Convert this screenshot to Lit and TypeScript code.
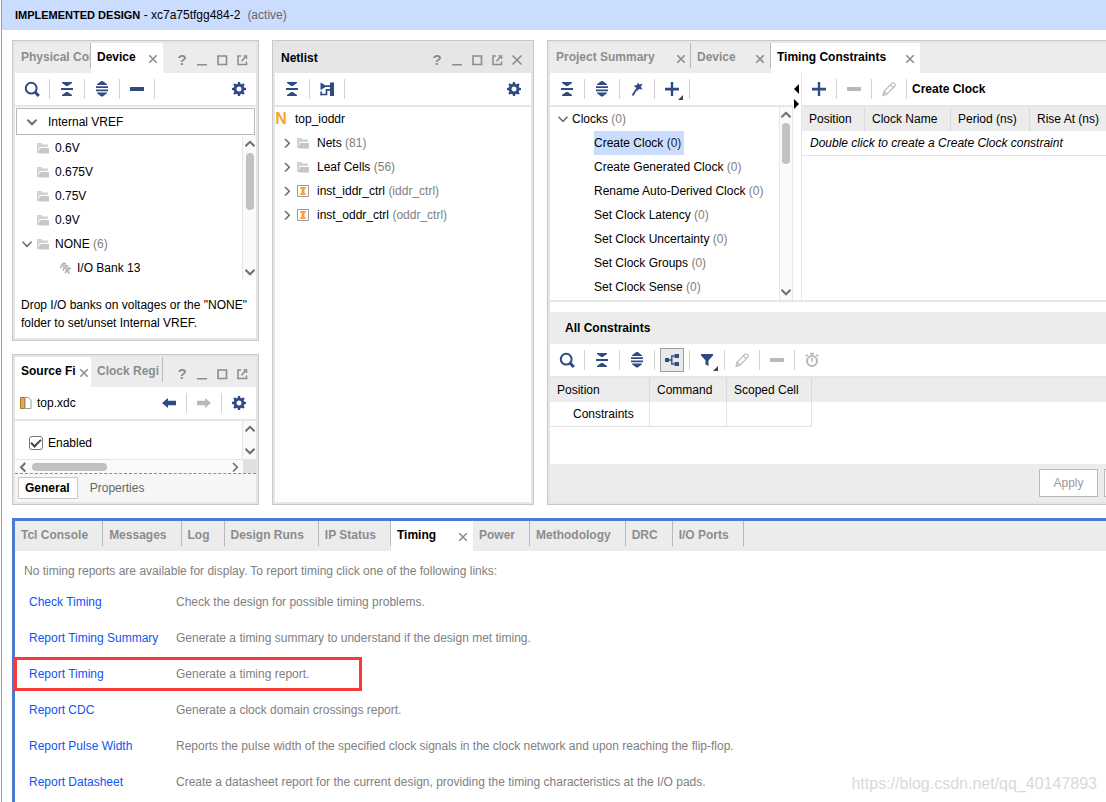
import { LitElement, html, svg, css, nothing } from "lit";
import { customElement, state } from "lit/decorators.js";
import { classMap } from "lit/directives/class-map.js";

const gearTeeth = [0, 45, 90, 135, 180, 225, 270, 315];

const glyphs: Record<string, unknown> = {
  search: svg`<circle cx="7.200" cy="7.200" r="5.400" fill="none" stroke="currentColor" stroke-width="2"/><path d="M11 11l3.800 4" stroke="currentColor" stroke-width="3"/>`,
  collapse: svg`<path d="M3 1h10v1L8.8 5H7.2L3 2zM2 7h12v2H2zM3 15h10v-1L8.8 11H7.2L3 14z" fill="currentColor"/>`,
  expand: svg`<path d="M7.300 0h1.400L13 3.200V4H3v-.8zM2 5.300h12V7H2zM2 8.500h12v1.700H2zM3 11.500h10v.8L8.700 15.500H7.300L3 12.300z" fill="currentColor"/>`,
  minus: svg`<path d="M1 6h14v4H1z" fill="currentColor"/>`,
  plus: svg`<path d="M1 6.800h5.800V1h2.400v5.800H15v2.600H9.200V15H6.800V9.400H1z" fill="currentColor"/>`,
  gear: svg`${gearTeeth.map((a) => svg`<path d="M6.300 4L7 1h2l.7 3z" fill="currentColor" transform=${`rotate(${a} 8 8)`}/>`)}<circle cx="8" cy="8" r="3.900" fill="none" stroke="currentColor" stroke-width="2.800"/>`,
  min: svg`<path d="M3 12h10v1.500H3z" fill="currentColor"/>`,
  max: svg`<path d="M4 4h8.500v8.500H4z" fill="none" stroke="currentColor" stroke-width="1.600"/>`,
  popout: svg`<path d="M7 4H4v8.500h8.500V9.500M9.500 4h3v3" fill="none" stroke="currentColor" stroke-width="1.500"/><path d="M7.500 9.300L11.500 4.800" stroke="currentColor" stroke-width="1.500"/>`,
  close: svg`<path d="M4.300 4.300l7.400 7.400M11.700 4.300l-7.400 7.400" stroke="currentColor" stroke-width="1.600"/>`,
  closeBig: svg`<path d="M3.500 3.500l9 9M12.500 3.500l-9 9" stroke="currentColor" stroke-width="1.600"/>`,
  down: svg`<path d="M3.500 5.800L8 10.300l4.500-4.500" fill="none" stroke="currentColor" stroke-width="1.600"/>`,
  up: svg`<path d="M3.500 10.300L8 5.800l4.500 4.500" fill="none" stroke="currentColor" stroke-width="2"/>`,
  downBold: svg`<path d="M3.500 5.800L8 10.300l4.500-4.500" fill="none" stroke="currentColor" stroke-width="2"/>`,
  right: svg`<path d="M6 4l4.300 4.200L6 12.500" fill="none" stroke="currentColor" stroke-width="1.600"/>`,
  left: svg`<path d="M10.300 4L6 8.200l4.300 4.300" fill="none" stroke="currentColor" stroke-width="2"/>`,
  folder: svg`<path d="M2 3h4.500l1 1.500H13V7H5L3.500 9.500V13H2z" fill="#d2d2d2"/><path d="M5.500 8H14v5.500H3.500V11z" fill="#c6c6c6"/>`,
  bank: svg`<path d="M3 4.500L6 3l7 6.500-1.500 3z" fill="#c4c4c4"/><path d="M3 8l2-2M5.500 10.500l2-2.500M8 13l2-3M6 3l3 1M8.500 5.500l3 .5M11 8l3 .5M10 11.500l3 2" stroke="#b0b0b0" stroke-width="1.400"/>`,
  inst: svg`<path d="M2.500 2.500h11v11h-11z" fill="#fff" stroke="#9b9b9b"/><path d="M5.200 4h5.600v1.700H9.500v4.600h1.300V12H5.200v-1.700h1.300V5.700H5.200z" fill="#f9a23b"/>`,
  net: svg`<path d="M1.500 1.500L8 5.200l-6.500 3.800z" fill="currentColor"/><path d="M11 1.500h4v13.500h-4z" fill="currentColor"/><path d="M7 5.200h5M11 8.800H7.500v4.700H1.500M2.200 10.500v4" fill="none" stroke="currentColor" stroke-width="1.700"/>`,
  pin: svg`<path d="M9 1.200l1 2.300 3.700-.8-1.900 3 1.700 2.900-3.300-.5-2.200 2-.5-3.100L4.700 5l3.100-.9z" fill="currentColor"/><path d="M8 7.500L3.500 14.500" stroke="currentColor" stroke-width="1.800"/>`,
  pencil: svg`<path d="M2 14.300l1-4L11 2.200q1-.8 2 0l.9.9q.8 1 0 2L5.800 13.200zM9.500 3.800l2.800 2.800M3.200 10.400l2.600 2.700" fill="none" stroke="currentColor" stroke-width="1.200"/>`,
  tree: svg`<path d="M1 6h4v4H1zM10.500 2h4.500v4h-4.500zM10.500 10h4.500v4h-4.500z" fill="currentColor"/><path d="M5 8h2.800M10.500 4H7.800v8h2.700" fill="none" stroke="currentColor" stroke-width="1.400"/>`,
  filter: svg`<path d="M2 2h12v1.500L9.500 8.500V14l-3-1.500v-4L2 3.500z" fill="currentColor"/>`,
  clock: svg`<circle cx="8" cy="9" r="5" fill="none" stroke="currentColor" stroke-width="2"/><path d="M8 5.800v4M6 1.500h4M1.500 4.500l2.500-2M14.500 4.500L12 2.500M8 1.500v2" stroke="currentColor" stroke-width="1.600"/>`,
  back: svg`<path d="M1 8l6-5v2.700h8v4.600H7V13z" fill="currentColor"/>`,
  forward: svg`<path d="M15 8L9 3v2.700H1v4.600h8V13z" fill="currentColor"/>`,
  file: svg`<path d="M2.500 2.500h4v11h-4z" fill="#f6a33c" stroke="#a5762f"/><path d="M7 2.500h3.500L13 5v8.500H7z" fill="#fff" stroke="#9d9d9d"/>`,
};

const icon = (name: string) =>
  html`<svg class="icon" viewBox="0 0 16 16" width="16" height="16" aria-hidden="true">${glyphs[name]}</svg>`;

type ToolOptions = { off?: boolean; menu?: boolean; on?: boolean };

const tool = (name: string, label: string, o: ToolOptions = {}) => html`<button
    class=${classMap({ tool: true, off: !!o.off, on: !!o.on })}
    aria-label=${label}
    ?disabled=${o.off}
  >
    <span class="face">${icon(name)}</span>${o.menu ? html`<i class="corner"></i>` : nothing}
  </button>`;

const sep = html`<i class="sep"></i>`;

const windowButtons = (close = false) => html`<div class="winbtns">
  <button class="win help" aria-label="Help">?</button>
  <button class="win" aria-label="Minimize">${icon("min")}</button>
  <button class="win" aria-label="Maximize">${icon("max")}</button>
  <button class="win" aria-label="Float">${icon("popout")}</button>
  ${close ? html`<button class="win" aria-label="Close">${icon("closeBig")}</button>` : nothing}
</div>`;

const tab = (label: string, o: { active?: boolean; close?: boolean; size?: string } = {}) => html`<div
    class="tab ${o.size ?? ""} ${o.active ? "active" : ""}"
  >
    <button class="tablabel">${label}</button>
    ${o.close ? html`<button class="x" aria-label="Close ${label}">${icon("close")}</button>` : nothing}
  </div>`;

const vscroll = (thumb = "") => html`<div class="vscroll" aria-hidden="true">
  ${icon("up")}
  <div class="track">${thumb ? html`<i class="thumb ${thumb}"></i>` : nothing}</div>
  ${icon("downBold")}
</div>`;

const voltages = ["0.6V", "0.675V", "0.75V", "0.9V"];

const netlist = [
  { icon: "folder", name: "Nets", note: "(81)" },
  { icon: "folder", name: "Leaf Cells", note: "(56)" },
  { icon: "inst", name: "inst_iddr_ctrl", note: "(iddr_ctrl)" },
  { icon: "inst", name: "inst_oddr_ctrl", note: "(oddr_ctrl)" },
];

const clockConstraints = [
  "Create Clock",
  "Create Generated Clock",
  "Rename Auto-Derived Clock",
  "Set Clock Latency",
  "Set Clock Uncertainty",
  "Set Clock Groups",
  "Set Clock Sense",
];

const reports = [
  ["Check Timing", "Check the design for possible timing problems."],
  ["Report Timing Summary", "Generate a timing summary to understand if the design met timing."],
  ["Report Timing", "Generate a timing report."],
  ["Report CDC", "Generate a clock domain crossings report."],
  ["Report Pulse Width", "Reports the pulse width of the specified clock signals in the clock network and upon reaching the flip-flop."],
  ["Report Datasheet", "Create a datasheet report for the current design, providing the timing characteristics at the I/O pads."],
];

@customElement("app-root")
export class AppRoot extends LitElement {
  @state() private selected = "Create Clock";

  static styles = css`
    :host {
      display: block;
      font: 12px/18px "Liberation Sans", Arial, sans-serif;
      color: #000;
      background: #fff;
    }
    * { box-sizing: border-box; }
    button {
      font: inherit;
      color: inherit;
      background: none;
      border: 0;
      padding: 0;
      margin: 0;
      text-align: left;
    }
    .icon { display: block; flex: none; }
    .app {
      min-height: 100vh;
      margin-left: 1px;
      border-left: 1px solid #9b9b9b;
      display: flex;
      flex-direction: column;
      overflow: hidden;
      position: relative;
    }
    .banner {
      height: 30px;
      padding-left: 13px;
      background: #cbddff;
      display: flex;
      align-items: center;
      white-space: pre;
    }
    .banner h1 { margin: 0; font-size: 11px; font-weight: bold; }
    .muted { color: #808080; }
    .banner .muted { padding-left: 7px; color: #666; }

    .docks {
      display: grid;
      grid-template-columns: minmax(0, 247fr) minmax(0, 262fr) minmax(0, 559fr);
      gap: 13px;
      padding: 10px 0 13px 10px;
    }
    .column { display: flex; flex-direction: column; gap: 13px; min-width: 0; }
    .panel {
      border: 1px solid #c8c8c8;
      box-shadow: inset 0 0 0 2px #e6e6e6;
      padding: 2px;
      background: #fff;
      display: flex;
      flex-direction: column;
      min-width: 0;
    }
    .panel.grow { flex: 1; }
    .panel.open {
      border-right: 0;
      padding-right: 0;
      box-shadow: inset 2px 0 #e6e6e6, inset 0 2px #e6e6e6, inset 0 -2px #e6e6e6;
    }

    .tabs {
      height: 30px;
      background: #ececec;
      display: flex;
      color: #8c8c8c;
      font-weight: bold;
      white-space: nowrap;
    }
    .tab {
      height: 25px;
      padding: 0 14px 0 6px;
      border-right: 1px solid #b9b9b9;
      display: flex;
      align-items: center;
      justify-content: space-between;
      overflow: hidden;
      flex: none;
    }
    .tab .tablabel { padding-top: 3px; }
    .tab.active {
      height: 30px;
      padding-bottom: 5px;
      background: #fff;
      color: #000;
      border-right: 0;
    }
    .tab.cut { width: 76px; padding-right: 0; }
    .tab.small { width: 72px; padding-right: 2px; }
    .tab.mid { width: 80px; padding-right: 2px; }
    .tab.large { width: 141px; padding-right: 1px; }
    .tab.wide { width: 149px; padding-right: 2px; }
    .x { color: #8c8c8c; padding-top: 7px; }
    .title {
      height: 30px;
      padding-left: 6px;
      background: #e6e6e6;
      display: flex;
      align-items: center;
    }
    .title h2, .section h2 { margin: 0; font-size: 12px; }
    .winbtns { margin-left: auto; padding: 3px 4px 0 0; display: flex; align-items: center; color: #8c8c8c; }
    .win { width: 20px; height: 20px; display: grid; place-items: center; }
    .help { font-size: 15px; font-weight: bold; text-align: center; }

    .bar {
      height: 34px;
      border-bottom: 2px solid #e6e6e6;
      display: flex;
      align-items: center;
      color: #2f4b83;
    }
    .bar .name { color: #000; padding-left: 3px; }
    .push { margin-left: auto; }
    .tool { width: 34px; height: 32px; display: grid; place-items: center; position: relative; }
    .tool.off { color: #b9b9b9; }
    .face { width: 24px; height: 24px; display: grid; place-items: center; }
    .tool.on .face { background: #e9e9e9; border: 1px solid #9d9d9d; }
    .corner {
      position: absolute;
      right: 6px;
      bottom: 5px;
      border-left: 5px solid transparent;
      border-bottom: 5px solid #444;
    }
    .sep { width: 1px; height: 20px; background: #d3d3d3; }

    .vref {
      margin: 1px;
      height: 27px;
      border: 1px solid #b9b9b9;
      display: flex;
      align-items: center;
      gap: 8px;
      padding-left: 7px;
      color: #000;
    }
    .vref .icon, .row .icon, .vscroll, .hscroll { color: #6e6e6e; }
    .scroller { display: flex; }
    .list { flex: 1; min-width: 0; margin: 0; padding: 0; list-style: none; }
    .row {
      height: 24px;
      display: flex;
      align-items: center;
      white-space: nowrap;
      gap: 4px;
    }
    .device .row { padding-left: 20px; }
    .device .row.open { padding-left: 4px; gap: 0; }
    .device .row.open .label { padding-left: 4px; }
    .device .row.deep { padding-left: 42px; }
    .vscroll {
      width: 14px;
      background: #fafafa;
      border-left: 1px solid #e6e6e6;
      display: flex;
      flex-direction: column;
      align-items: center;
      flex: none;
    }
    .track { flex: 1; }
    .thumb { display: block; width: 8px; border-radius: 4px; background: #c1c1c1; }
    .thumb.t1 { height: 57px; margin-top: 1px; }
    .thumb.t2 { height: 41px; }
    .hint { margin: 0; padding: 16px 4px 6px 6px; white-space: nowrap; }

    .filebar { padding-left: 3px; }
    .props { display: flex; height: 38px; }
    .check { flex: 1; display: flex; align-items: center; gap: 5px; padding: 6px 0 0 14px; }
    .check input {
      appearance: none;
      width: 14px;
      height: 14px;
      margin: 0;
      border: 1px solid #777;
      border-radius: 3px;
      display: grid;
      place-items: center;
    }
    .check input:checked::before {
      content: "";
      width: 8px;
      height: 4px;
      border-left: 2px solid #444;
      border-bottom: 2px solid #444;
      transform: translateY(-1px) rotate(-45deg);
    }
    .hscroll {
      height: 15px;
      border-top: 1px solid #e6e6e6;
      border-bottom: 1px dashed #8c8c8c;
      background: #fafafa;
      display: flex;
      align-items: center;
    }
    .hthumb { width: 75px; height: 8px; border-radius: 4px; background: #c1c1c1; margin-left: 1px; }
    .hscroll .end { margin-left: auto; }
    .cornerbox { width: 13px; height: 100%; background: #e0e0e0; }
    .subtabs { display: flex; align-items: center; flex: 1; min-height: 28px; background: #f6f6f6; padding: 0 3px; color: #666; }
    .subtabs button { height: 22px; padding: 0 12px; }
    .subtabs .active { border: 1px solid #c8c8c8; background: #fff; font-weight: bold; color: #000; padding: 0 7px 0 6px; }

    .netlist .row { padding-left: 4px; gap: 0; }
    .netlist .row .label { padding-left: 6px; }
    .netlist .row.root { padding-left: 0; }
    .netlist .row.root .label { padding-left: 8px; }
    .netmark { color: #f9a52b; font-size: 16px; width: 12px; text-align: center; }

    .split { display: grid; grid-template-columns: 243px 9px minmax(0, 1fr); border-bottom: 2px solid #e6e6e6; }
    .splitter { border-right: 1px solid #e6e6e6; padding-top: 11px; display: flex; flex-direction: column; gap: 5px; }
    .arrow { width: 0; border: 5px solid transparent; margin-left: 1px; }
    .arrow.l { border-right-color: #000; border-left-width: 0; }
    .arrow.r { border-left-color: #000; border-right-width: 0; }
    .treepane .vscroll { border-right: 1px solid #e6e6e6; }
    .treepane .scroller { height: 193px; }
    .treepane .row { padding-left: 5px; gap: 1px; }
    .leaf { display: block; padding-left: 44px; height: 24px; white-space: nowrap; }
    .leaf button { height: 24px; padding-right: 3px; }
    .leaf button.sel { background: #cbddff; }
    .leaf button.sel .muted { color: #222; }
    .bar strong { color: #000; padding-left: 5px; }

    table { border-collapse: separate; border-spacing: 0; table-layout: fixed; white-space: nowrap; }
    th { font-weight: normal; text-align: left; background: #ececec; padding: 0 0 0 7px; height: 24px; border-right: 1px solid #d9d9d9; overflow: hidden; }
    td { padding: 0 0 0 8px; height: 25px; border-bottom: 1px solid #e3e3e3; overflow: hidden; }
    .clocktable { width: 100%; }
    .clocktable th:last-child { border-right: 0; }
    .c63 { width: 63px; }
    .c86 { width: 86px; }
    .c79 { width: 79px; }
    .c100 { width: 100px; }
    .c77 { width: 77px; }
    .c85 { width: 85px; }
    .section { margin-top: 10px; height: 32px; background: #ececec; display: flex; align-items: center; padding-left: 15px; }
    .strip { background: linear-gradient(#ececec 24px, #fff 24px); flex: 1; }
    .alltable { width: 262px; }
    .alltable td { border-right: 1px solid #e3e3e3; }
    .alltable .indent { padding-left: 23px; }
    .actions { height: 38px; background: #ececec; display: flex; justify-content: flex-end; align-items: center; gap: 6px; overflow: hidden; }
    .actions button { width: 59px; height: 28px; background: #fff; border: 1px solid #b9b9b9; color: #9b9b9b; text-align: center; }
    .actions .edge { width: 2px; border-right: 0; }

    .results { flex: 1; border: 3px solid #4a7bd0; border-right: 0; border-bottom: 0; margin-left: 10px; color: #808080; }
    .results .tab.active { width: 82px; padding-right: 2px; }
    .results p { margin: 0; padding: 10px 0 3px 9px; line-height: 20px; }
    .report {
      height: 36px;
      padding-left: 14px;
      display: grid;
      grid-template-columns: 147px minmax(0, 1fr);
      align-items: center;
      position: relative;
      white-space: nowrap;
    }
    a { color: #0d55f5; text-decoration: none; }
    .mark { position: absolute; left: -1px; top: 1px; width: 348px; height: 34px; border: 3px solid #f93a3a; }
    .watermark { position: absolute; right: 9px; bottom: 8px; font-size: 16px; line-height: 20px; color: #d9d9d9; }
  `;

  private devicePanel() {
    return html`<section class="panel device">
      <div class="tabs">
        ${tab("Physical Con", { size: "cut" })} ${tab("Device", { active: true, close: true, size: "small" })}
        ${windowButtons()}
      </div>
      <div class="bar">
        ${tool("search", "Search")}${sep}${tool("collapse", "Collapse all")}${sep}${tool("expand", "Expand all")}${sep}${tool("minus", "Remove")}${sep}
        <div class="push">${tool("gear", "Settings")}</div>
      </div>
      <button class="vref" aria-expanded="true">${icon("downBold")}<span>Internal VREF</span></button>
      <div class="scroller">
        <ul class="list">
          ${voltages.map((v) => html`<li class="row">${icon("folder")}<span>${v}</span></li>`)}
          <li class="row open">${icon("down")}${icon("folder")}<span class="label">NONE <span class="muted">(6)</span></span></li>
          <li class="row deep">${icon("bank")}<span>I/O Bank 13</span></li>
        </ul>
        ${vscroll("t1")}
      </div>
      <p class="hint">Drop I/O banks on voltages or the "NONE"<br />folder to set/unset Internal VREF.</p>
    </section>`;
  }

  private sourcePanel() {
    return html`<section class="panel grow">
      <div class="tabs">
        ${tab("Source Fi", { active: true, close: true, size: "cut" })} ${tab("Clock Regi", { size: "small" })}
        ${windowButtons()}
      </div>
      <div class="bar filebar">
        ${icon("file")}<span class="name">top.xdc</span>
        <div class="push"></div>
        ${tool("back", "Back")}${sep}${tool("forward", "Forward", { off: true })}${sep}${tool("gear", "Settings")}
      </div>
      <div class="props">
        <label class="check"><input type="checkbox" checked />Enabled</label>
        ${vscroll()}
      </div>
      <div class="hscroll" aria-hidden="true">
        ${icon("left")}<i class="hthumb"></i><span class="end">${icon("right")}</span><i class="cornerbox"></i>
      </div>
      <div class="subtabs"><button class="active">General</button><button>Properties</button></div>
    </section>`;
  }

  private netlistPanel() {
    return html`<section class="panel netlist">
      <div class="title"><h2>Netlist</h2>${windowButtons(true)}</div>
      <div class="bar">
        ${tool("collapse", "Collapse all")}${sep}${tool("net", "Show schematic")}${sep}
        <div class="push">${tool("gear", "Settings")}</div>
      </div>
      <ul class="list">
        <li class="row root"><b class="netmark">N</b><span class="label">top_ioddr</span></li>
        ${netlist.map(
          (n) => html`<li class="row">
            ${icon("right")}${icon(n.icon)}<span class="label">${n.name} <span class="muted">${n.note}</span></span>
          </li>`,
        )}
      </ul>
    </section>`;
  }

  private timingPanel() {
    return html`<section class="panel open">
      <div class="tabs">
        ${tab("Project Summary", { close: true, size: "large" })} ${tab("Device", { close: true, size: "mid" })}
        ${tab("Timing Constraints", { active: true, close: true, size: "wide" })}
      </div>
      <div class="split">
        <div class="treepane">
          <div class="bar">
            ${tool("collapse", "Collapse all")}${sep}${tool("expand", "Expand all")}${sep}${tool("pin", "Wizard")}${sep}${tool("plus", "Add", { menu: true })}${sep}
          </div>
          <div class="scroller">
            <ul class="list">
              <li class="row">${icon("down")}<span>Clocks <span class="muted">(0)</span></span></li>
              ${clockConstraints.map(
                (c) => html`<li class="leaf">
                  <button class=${classMap({ sel: c === this.selected })} @click=${() => (this.selected = c)}>
                    ${c} <span class="muted">(0)</span>
                  </button>
                </li>`,
              )}
            </ul>
            ${vscroll("t2")}
          </div>
        </div>
        <div class="splitter"><i class="arrow l"></i><i class="arrow r"></i></div>
        <div>
          <div class="bar">
            ${tool("plus", "Add")}${sep}${tool("minus", "Remove", { off: true })}${sep}${tool("pencil", "Edit", { off: true })}${sep}
            <strong>Create Clock</strong>
          </div>
          <table class="clocktable">
            <thead>
              <tr><th class="c63">Position</th><th class="c86">Clock Name</th><th class="c79">Period (ns)</th><th>Rise At (ns)</th></tr>
            </thead>
            <tbody>
              <tr><td colspan="4"><em>Double click to create a Create Clock constraint</em></td></tr>
            </tbody>
          </table>
        </div>
      </div>
      <div class="section"><h2>All Constraints</h2></div>
      <div class="bar">
        ${tool("search", "Search")}${sep}${tool("collapse", "Collapse all")}${sep}${tool("expand", "Expand all")}${sep}${tool("tree", "Group", { on: true })}${sep}${tool("filter", "Filter", { menu: true })}${sep}${tool("pencil", "Edit", { off: true })}${sep}${tool("minus", "Remove", { off: true })}${sep}${tool("clock", "Timing", { off: true })}
      </div>
      <div class="strip">
        <table class="alltable">
          <thead>
            <tr><th class="c100">Position</th><th class="c77">Command</th><th class="c85">Scoped Cell</th></tr>
          </thead>
          <tbody>
            <tr><td class="indent">Constraints</td><td></td><td></td></tr>
          </tbody>
        </table>
      </div>
      <div class="actions"><button disabled>Apply</button><button class="edge" aria-label="Cancel"></button></div>
    </section>`;
  }

  render() {
    return html`<div class="app">
      <header class="banner"><h1>IMPLEMENTED DESIGN</h1><span> - xc7a75tfgg484-2</span><span class="muted">(active)</span></header>
      <main class="docks">
        <div class="column">${this.devicePanel()}${this.sourcePanel()}</div>
        ${this.netlistPanel()}${this.timingPanel()}
      </main>
      <section class="results">
        <div class="tabs">
          ${["Tcl Console", "Messages", "Log", "Design Runs", "IP Status"].map((t) => tab(t))}
          ${tab("Timing", { active: true, close: true })}
          ${["Power", "Methodology", "DRC", "I/O Ports"].map((t) => tab(t))}
        </div>
        <p>No timing reports are available for display. To report timing click one of the following links:</p>
        ${reports.map(
          ([name, text]) => html`<div class="report">
            <span><a href="#">${name}</a></span><span>${text}</span>
            ${name === "Report Timing" ? html`<i class="mark"></i>` : nothing}
          </div>`,
        )}
      </section>
      <div class="watermark">https://blog.csdn.net/qq_40147893</div>
    </div>`;
  }
}
